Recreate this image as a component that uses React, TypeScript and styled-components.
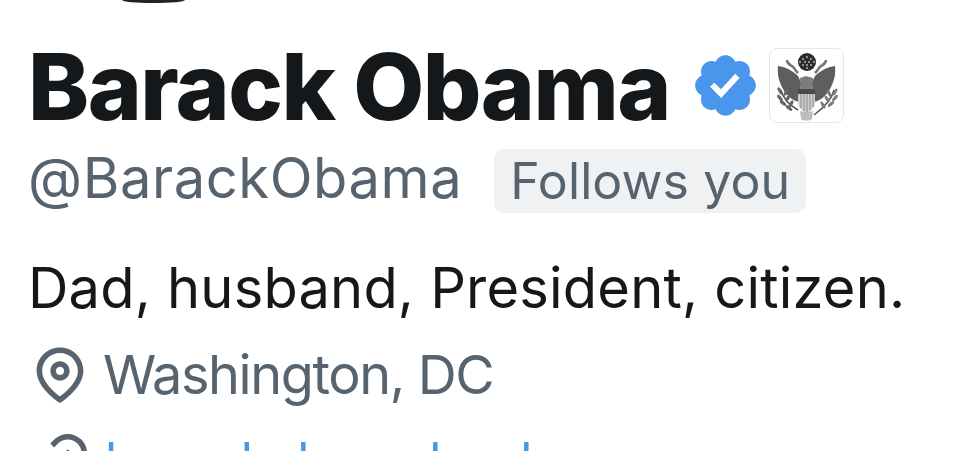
import React from 'react';
import styled, { createGlobalStyle } from 'styled-components';

const Global = createGlobalStyle`
  html, body { margin: 0; padding: 0; background: #fff; }
  #root { width: 960px; height: 451px; overflow: hidden; }
`;
const Page = styled.div`
  width: 960px; height: 451px; overflow: hidden; background: #fff;
  font-family: Inter, "Liberation Sans", sans-serif; color: #15181b;
  display: flex; flex-direction: column; padding-left: 28px; box-sizing: border-box;
`;
const AvatarEdge = styled.div`
  width: 63px; height: 3px; margin-left: 94px; background: #222;
  border-radius: 0 0 32px 32px / 0 0 3px 3px; flex: none;
`;
const NameRow = styled.div`
  display: flex; align-items: center; height: 100px; margin-top: 34px; flex: none;
`;
const Name = styled.h1`
  margin: 0; width: 662px; flex: none; font-size: 92px; line-height: 100px; font-weight: 800; letter-spacing: -1.5px; white-space: nowrap;
`;
const Badge = styled.svg`
  width: 71px; height: 71px; margin-top: -4px; flex: none;
`;
const Seal = styled.div`
  width: 75px; height: 75px; margin: -4px 0 0 8px; box-sizing: border-box; flex: none;
  border: 1px solid #e6e7e9; border-radius: 8px; overflow: hidden;
`;
const SealArt = styled.svg`
  display: block; width: 75px; height: 75px; margin: -1px; filter: blur(0.5px);
`;
const HandleRow = styled.div`
  display: flex; align-items: flex-start; margin-top: 11px; flex: none;
`;
const Handle = styled.span`
  font-size: 56px; line-height: 60px; letter-spacing: 0.6px; color: #57636e; white-space: nowrap;
`;
const FollowsTag = styled.span`
  margin: 1px 0 0 32px; padding: 0 16px; height: 64px; line-height: 64px; font-size: 50px; letter-spacing: 0.1px; color: #57636e;
  background: #eff1f3; border-radius: 10px; white-space: nowrap;
`;
const Bio = styled.p`
  margin: 45px 0 0; font-size: 56px; line-height: 60px; letter-spacing: 0.2px; white-space: nowrap; flex: none;
`;
const MetaRow = styled.div<{ $gap: number; $size: number; $spacing: number }>`
  display: flex; align-items: center; gap: 10px; height: 66px; margin: ${p => p.$gap}px 0 0 -1px; flex: none;
  font-size: ${p => p.$size}px; line-height: 66px; letter-spacing: ${p => p.$spacing}px; color: #57636e; white-space: nowrap;
`;
const MetaLink = styled.span`
  margin-left: 2px; color: #4a98e0;
`;
const MetaIcon = styled.svg`
  width: 66px; height: 66px; flex: none; fill: #57636e;
`;

const Pin = () => (
  <MetaIcon viewBox="0 0 24 24">
    <path d="M12 7c-1.93 0-3.5 1.57-3.5 3.5S10.07 14 12 14s3.5-1.57 3.5-3.5S13.93 7 12 7zm0 5c-.827 0-1.5-.673-1.5-1.5S11.173 9 12 9s1.5.673 1.5 1.5S12.827 12 12 12zm0-10c-4.687 0-8.5 3.813-8.5 8.5 0 5.967 7.621 11.116 7.945 11.332l.555.37.555-.37c.324-.216 7.945-5.365 7.945-11.332C20.5 5.813 16.687 2 12 2zm0 17.77c-1.665-1.241-6.5-5.196-6.5-9.27C5.5 6.916 8.416 4 12 4s6.5 2.916 6.5 6.5c0 4.073-4.835 8.028-6.5 9.27z" />
  </MetaIcon>
);
const LinkIcon = () => (
  <MetaIcon viewBox="0 0 24 24">
    <path d="M18.36 5.64c-1.95-1.96-5.11-1.96-7.07 0L9.88 7.05 8.46 5.64l1.42-1.42c2.73-2.73 7.16-2.73 9.9 0 2.73 2.74 2.73 7.17 0 9.9l-1.42 1.42-1.41-1.42 1.41-1.41c1.96-1.96 1.96-5.12 0-7.07zm-2.12 3.53l-7.07 7.07-1.41-1.41 7.07-7.07 1.41 1.41zm-12.02.71l1.42-1.42 1.41 1.42-1.41 1.41c-1.96 1.96-1.96 5.12 0 7.07 1.95 1.96 5.11 1.96 7.07 0l1.41-1.41 1.42 1.41-1.42 1.42c-2.73 2.73-7.16 2.73-9.9 0-2.73-2.74-2.73-7.17 0-9.9z" />
  </MetaIcon>
);

const crestDots = [
  [38, 9], [34, 11], [42, 11], [31, 14], [36, 14], [40, 14], [45, 14], [34, 17], [38, 17], [42, 17], [38, 20],
];
const leaves = [
  [11, 43, 60], [17, 44, 110], [11, 50, 50], [19, 50, 120], [14, 55, 40], [22, 56, 120], [20, 60, 40],
];
const arrows = [
  [66, 44, -60], [60, 45, -110], [66, 50, -50], [58, 51, -120], [62, 56, -40], [54, 57, -120],
];

const Eagle = () => (
  <SealArt viewBox="0 0 75 75">
    <circle cx="38" cy="14" r="9" fill="#2c2c2e" />
    {crestDots.map(([x, y]) => (
      <circle key={`${x}-${y}`} cx={x} cy={y} r="1" fill="#b5b5b5" />
    ))}
    <path fill="#5e5e5e" d="M9 18c8 1 15 5 20 10l3 6-1 20C27 54 19 50 14 41 10 34 8 26 9 18zM66 18c-8 1-15 5-20 10l-3 6 1 20c4 0 12-4 17-13 4-7 6-15 5-23z" />
    <path fill="none" stroke="#777" strokeWidth="2.6" d="M18 12c0 5 5 5 7 8 1 2 2 3 4 5M57 12c0 5-5 5-7 8-1 2-2 3-4 5" />
    <path fill="#7c7c7c" d="M31 30l6-2 7 2-1 12H32z" />
    <path fill="#cfcfcf" d="M29 41h17v13c0 5-4 9-8.500 11-4.500-2-8.500-6-8.500-11z" />
    <path fill="none" stroke="#8a8a8a" strokeWidth="1" d="M32 46v14M35 46v17M38 46v18M41 46v16M44 46v13" />
    <path fill="#4a4a4a" d="M29 41h17v5H29z" />
    <path fill="none" stroke="#555" strokeWidth="1.500" d="M12 42c2 8 8 15 17 20M65 42c-2 8-8 16-20 25" />
    {leaves.map(([x, y, a]) => (
      <ellipse key={`l${x}-${y}`} cx={x} cy={y} rx="4" ry="1.700" fill="#666" transform={`rotate(${a} ${x} ${y})`} />
    ))}
    {arrows.map(([x, y, a]) => (
      <ellipse key={`a${x}-${y}`} cx={x} cy={y} rx="4" ry="1.500" fill="#7a7a7a" transform={`rotate(${a} ${x} ${y})`} />
    ))}
    <path fill="#bdbdbd" d="M31 63c3 1 10 1 13 0l-1 8c-2 2-9 2-11 0z" />
  </SealArt>
);

export default function App() {
  return (
    <Page>
      <Global />
      <AvatarEdge />
      <NameRow>
        <Name>Barack Obama</Name>
        <Badge viewBox="0 0 24 24">
          <path fill="#4a96ec" d="M22.25 12c0-1.43-.88-2.67-2.19-3.34.46-1.39.2-2.9-.81-3.91s-2.52-1.27-3.91-.81c-.66-1.31-1.91-2.19-3.34-2.19s-2.67.88-3.33 2.19c-1.4-.46-2.91-.2-3.92.81s-1.26 2.52-.8 3.91c-1.31.67-2.2 1.91-2.2 3.34s.89 2.67 2.2 3.34c-.46 1.39-.21 2.9.8 3.91s2.52 1.26 3.91.81c.67 1.31 1.91 2.19 3.34 2.19s2.68-.88 3.34-2.19c1.39.45 2.9.2 3.91-.81s1.27-2.52.81-3.91c1.31-.67 2.19-1.91 2.19-3.34zm-11.71 4.2L6.8 12.46l1.41-1.42 2.26 2.26 4.8-5.23 1.47 1.36-6.2 6.77z" />
        </Badge>
        <Seal><Eagle /></Seal>
      </NameRow>
      <HandleRow>
        <Handle>@BarackObama</Handle>
        <FollowsTag>Follows you</FollowsTag>
      </HandleRow>
      <Bio>Dad, husband, President, citizen.</Bio>
      <MetaRow $gap={24} $size={54} $spacing={-1.4}><Pin />Washington, DC</MetaRow>
      <MetaRow $gap={20} $size={50} $spacing={0.2}><LinkIcon /><MetaLink>barackobamabook</MetaLink></MetaRow>
    </Page>
  );
}
